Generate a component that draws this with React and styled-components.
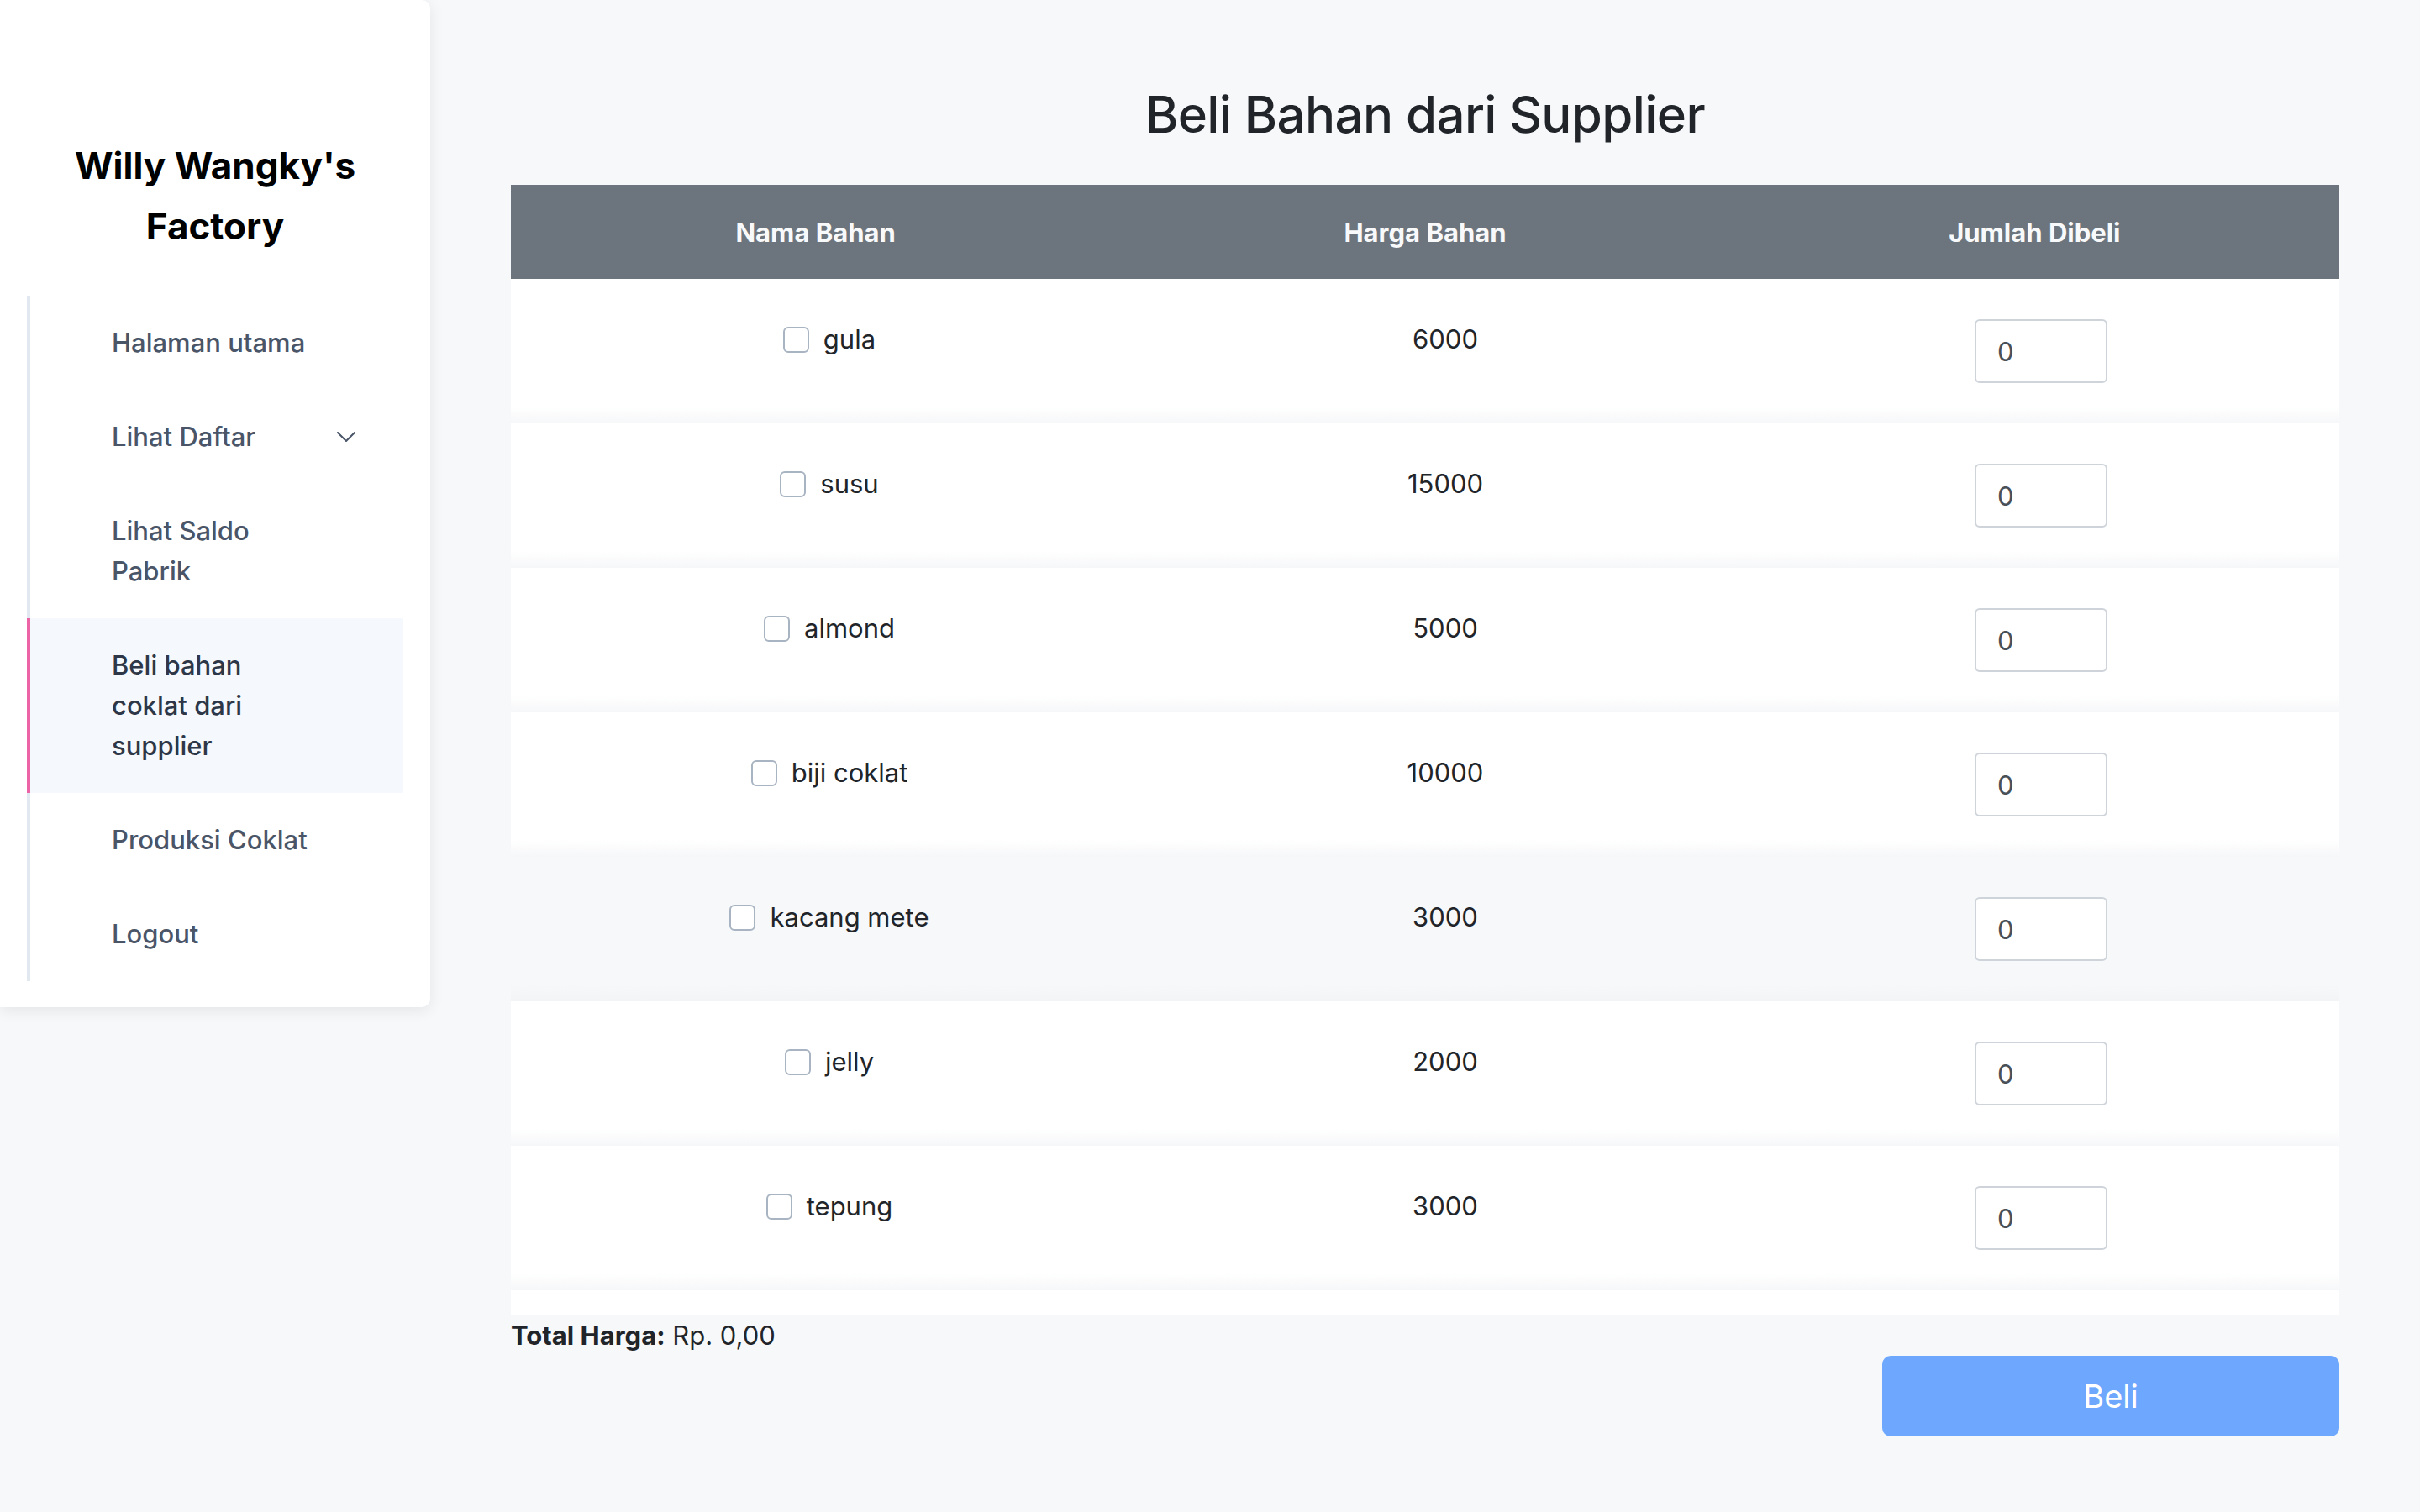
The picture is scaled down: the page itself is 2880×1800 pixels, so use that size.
import React from "react";
import styled, { createGlobalStyle } from "styled-components";

const GlobalStyle = createGlobalStyle`
    * {
        box-sizing: border-box;
    }
    body {
        margin: 0;
        background-color: #f7f8fa;
        font-family: Inter, "Noto Sans", sans-serif;
        color: #212529;
    }
`

const Page = styled.div`
    display: flex;
    align-items: flex-start;
    min-height: 100vh;
`

const Sidebar = styled.aside`
    width: 512px;
    flex-shrink: 0;
    background-color: #ffffff;
    border-radius: 0 10px 10px 0;
    box-shadow: 0 4px 18px rgba(0, 0, 0, 0.08);
    padding: 161px 0 31px;
`

const Brand = styled.h2`
    margin: 0 0 47px;
    padding: 0 60px;
    font-size: 44px;
    font-weight: 700;
    line-height: 72px;
    text-align: center;
    color: #000000;
`

const Nav = styled.nav`
    margin: 0 32px;
    border-left: 4px solid #e2e8f0;
    display: flex;
    flex-direction: column;
`

const NavItem = styled.a`
    display: flex;
    align-items: center;
    justify-content: space-between;
    margin-left: -4px;
    border-left: 4px solid ${p => p.$active ? "#ed64a6" : "transparent"};
    background-color: ${p => p.$active ? "#f5f8fc" : "transparent"};
    padding: 32px ${p => p.$dropdown ? "57px" : "100px"} 32px 97px;
    font-size: 31px;
    font-weight: 500;
    line-height: 48px;
    color: ${p => p.$active ? "#2d3748" : "#4a5568"};
    text-decoration: none;
    cursor: pointer;
`

const Main = styled.main`
    flex: 1;
    display: flex;
    flex-direction: column;
    padding: 99px 96px 0;
`

const Title = styled.h1`
    margin: 0 0 47px;
    font-size: 60px;
    font-weight: 500;
    line-height: 74px;
    letter-spacing: -0.6px;
    text-align: center;
    color: #212529;
`

const HeaderRow = styled.div`
    display: grid;
    grid-template-columns: 1fr 1fr 1fr;
    height: 112px;
    align-items: center;
    justify-items: center;
    background-color: #6c757d;
    color: #f8f9fa;
    font-size: 31px;
    font-weight: 700;
`

const Body = styled.div`
    background-color: #ffffff;
    padding-bottom: 30px;
`

const Row = styled.div`
    display: grid;
    grid-template-columns: 758fr 708fr 710fr;
    background: ${p => p.$hover
        ? "linear-gradient(to bottom, #f7f8fa calc(100% - 20px), #f3f4f6 100%)"
        : "linear-gradient(to bottom, #ffffff calc(100% - 20px), #f6f7f9 100%)"};
`

const Cell = styled.div`
    display: flex;
    justify-content: center;
    align-items: flex-start;
    padding: 48px 0;
    font-size: 31px;
    line-height: 48px;
`

const Label = styled.label`
    display: flex;
    align-items: center;
    gap: 17px;
    height: 48px;
`

const Check = styled.input`
    appearance: none;
    margin: 0;
    width: 31px;
    height: 31px;
    border: 2.5px solid #a9b4c2;
    border-radius: 6px;
    background-color: #ffffff;
`

const Qty = styled.input`
    width: 158px;
    height: 76px;
    border: 2px solid #ced4da;
    border-radius: 6px;
    padding: 0 25px;
    font-family: inherit;
    font-size: 31px;
    color: #495057;
    background-color: #ffffff;
`

const Total = styled.div`
    font-size: 31px;
    line-height: 48px;
    color: #212529;

    strong {
        font-weight: 700;
    }
`

const BuyButton = styled.button`
    align-self: flex-end;
    width: 25%;
    height: 96px;
    border: none;
    border-radius: 10px;
    background-color: #6ea8fe;
    color: #ffffff;
    font-family: inherit;
    font-size: 38px;
    cursor: pointer;
`

const Chevron = () => (
    <svg width="22" height="12" viewBox="0 0 22 12" fill="none">
        <polyline points="1,1 11,11 21,1" stroke="#4a5568" strokeWidth="2" strokeLinecap="round" strokeLinejoin="round" />
    </svg>
)

const bahan = [
    { nama: "gula", harga: 6000 },
    { nama: "susu", harga: 15000 },
    { nama: "almond", harga: 5000 },
    { nama: "biji coklat", harga: 10000 },
    { nama: "kacang mete", harga: 3000, hover: true },
    { nama: "jelly", harga: 2000 },
    { nama: "tepung", harga: 3000 },
]

const App = () => {
    return (
        <Page>
            <GlobalStyle />
            <Sidebar>
                <Brand>Willy Wangky's Factory</Brand>
                <Nav>
                    <NavItem>Halaman utama</NavItem>
                    <NavItem $dropdown>Lihat Daftar <Chevron /></NavItem>
                    <NavItem>Lihat Saldo Pabrik</NavItem>
                    <NavItem $active>Beli bahan coklat dari supplier</NavItem>
                    <NavItem>Produksi Coklat</NavItem>
                    <NavItem>Logout</NavItem>
                </Nav>
            </Sidebar>
            <Main>
                <Title>Beli Bahan dari Supplier</Title>
                <HeaderRow>
                    <div>Nama Bahan</div>
                    <div>Harga Bahan</div>
                    <div>Jumlah Dibeli</div>
                </HeaderRow>
                <Body>
                    {bahan.map(b => (
                        <Row key={b.nama} $hover={b.hover}>
                            <Cell>
                                <Label>
                                    <Check type="checkbox" />
                                    {b.nama}
                                </Label>
                            </Cell>
                            <Cell>{b.harga}</Cell>
                            <Cell>
                                <Qty type="number" defaultValue={0} />
                            </Cell>
                        </Row>
                    ))}
                </Body>
                <Total><strong>Total Harga:</strong> Rp. 0,00</Total>
                <BuyButton>Beli</BuyButton>
            </Main>
        </Page>
    )
}

export default App
